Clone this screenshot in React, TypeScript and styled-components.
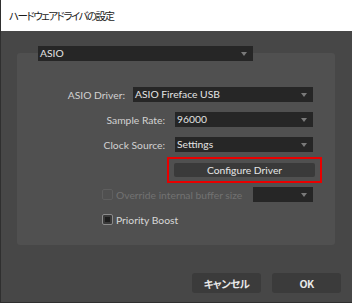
import React from "react";
import styled, { createGlobalStyle } from "styled-components";

const Global = createGlobalStyle`
  html, body { margin: 0; padding: 0; background: #ffffff; }
  * { box-sizing: border-box; }
`;

const Window = styled.div`
  width: 352px;
  height: 303px;
  background: #474747;
  border-left: 1px solid #2f2f2f;
  border-bottom: 1px solid #2f2f2f;
  display: flex;
  flex-direction: column;
  font-family: Lato, "Liberation Sans", "Noto Sans CJK JP", sans-serif;
  font-size: 10.3px;
`;

const TitleBar = styled.div`
  height: 31px;
  flex: none;
  background: #ffffff;
  display: flex;
  align-items: center;
  padding-left: 8px;
  color: #1a1a1a;
  font-family: "Noto Sans CJK JP", sans-serif;
  font-size: 10.5px;
  letter-spacing: -1.5px;
  font-feature-settings: "palt";
`;

const Body = styled.div`
  flex: 1;
  display: flex;
  flex-direction: column;
  padding-left: 16px;
`;

const Select = styled.div<{ $width: number }>`
  position: relative;
  z-index: 1;
  width: ${(p) => p.$width}px;
  height: 15px;
  flex: none;
  background: #262626;
  color: #e4e4e4;
  line-height: 15px;
  padding-left: 2px;
  white-space: nowrap;
  &::after {
    content: "";
    position: absolute;
    right: 6px;
    top: 6px;
    border-left: 3.5px solid transparent;
    border-right: 3.5px solid transparent;
    border-top: 4px solid #7a7a7a;
  }
`;

const TopSelect = styled(Select)`
  margin-top: 15px;
  margin-left: 21px;
`;

const Panel = styled.div`
  width: 318px;
  height: 192px;
  margin-top: -8px;
  background: #505050;
  border-radius: 3px;
  padding: 34px 22px 0 0;
  display: flex;
  flex-direction: column;
`;

const FieldRow = styled.div<{ $gap: number; $top: number }>`
  display: flex;
  justify-content: flex-end;
  align-items: center;
  gap: ${(p) => p.$gap}px;
  margin-top: ${(p) => p.$top}px;
  height: 15px;
`;

const Label = styled.span`
  color: #d2d2d2;
`;

const Highlight = styled.div`
  align-self: flex-end;
  margin-right: -9px;
  margin-top: 5px;
  width: 155px;
  height: 26px;
  border: 2px solid #e80000;
  padding: 4px 5px;
`;

const ConfigureButton = styled.div`
  width: 141px;
  height: 14px;
  background: #3a3a3a;
  border-radius: 2px;
  color: #e6e6e6;
  display: flex;
  align-items: center;
  justify-content: center;
`;

const CheckRow = styled.div<{ $top: number }>`
  display: flex;
  align-items: center;
  height: 15px;
  margin-top: ${(p) => p.$top}px;
  padding-left: 85px;
`;

const Box = styled.span<{ $checked?: boolean; $disabled?: boolean }>`
  width: 11px;
  height: 11px;
  border-radius: 2px;
  border: 1px solid ${(p) => (p.$disabled ? "#5e5e5e" : "#8c8c8c")};
  background: ${(p) => (p.$checked ? "#3a3a3a" : "transparent")};
  display: flex;
  align-items: center;
  justify-content: center;
  margin-right: 3px;
  &::before {
    content: "";
    display: ${(p) => (p.$checked ? "block" : "none")};
    width: 5px;
    height: 5px;
    background: #1c1c1c;
  }
`;

const CheckText = styled.span<{ $disabled?: boolean }>`
  color: ${(p) => (p.$disabled ? "#727272" : "#d8d8d8")};
  flex: 1;
`;

const Footer = styled.div`
  display: flex;
  justify-content: flex-end;
  gap: 11px;
  margin-top: 28px;
  padding-right: 11px;
`;

const DialogButton = styled.div`
  width: 69px;
  height: 20px;
  background: #3b3b3b;
  border-radius: 3px;
  color: #e8e8e8;
  font-weight: bold;
  font-size: 10.5px;
  letter-spacing: -0.6px;
  font-family: "Noto Sans CJK JP", sans-serif;
  font-feature-settings: "palt";
  display: flex;
  align-items: center;
  justify-content: center;
`;

export default function App() {
  return (
    <>
      <Global />
      <Window>
        <TitleBar>ハードウェアドライバの設定</TitleBar>
        <Body>
          <TopSelect $width={215}>ASIO</TopSelect>
          <Panel>
            <FieldRow $gap={8} $top={0}>
              <Label>ASIO Driver:</Label>
              <Select $width={180}>ASIO Fireface USB</Select>
            </FieldRow>
            <FieldRow $gap={10} $top={10}>
              <Label>Sample Rate:</Label>
              <Select $width={138}>96000</Select>
            </FieldRow>
            <FieldRow $gap={10} $top={10}>
              <Label>Clock Source:</Label>
              <Select $width={138}>Settings</Select>
            </FieldRow>
            <Highlight>
              <ConfigureButton>Configure Driver</ConfigureButton>
            </Highlight>
            <CheckRow $top={4}>
              <Box $disabled />
              <CheckText $disabled>Override internal buffer size</CheckText>
              <Select $width={60} />
            </CheckRow>
            <CheckRow $top={10}>
              <Box $checked />
              <CheckText>Priority Boost</CheckText>
            </CheckRow>
          </Panel>
          <Footer>
            <DialogButton>キャンセル</DialogButton>
            <DialogButton>OK</DialogButton>
          </Footer>
        </Body>
      </Window>
    </>
  );
}
